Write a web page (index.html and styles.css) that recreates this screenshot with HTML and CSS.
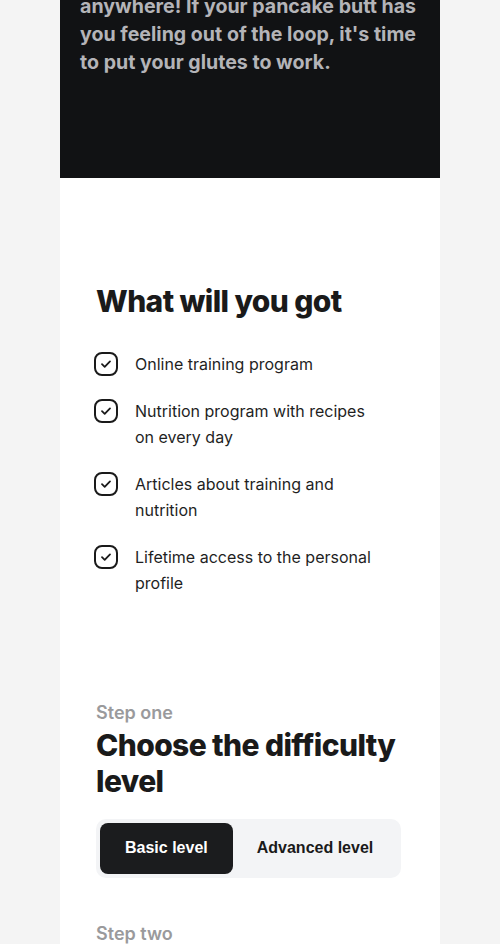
FILE: index.html
```html
<!DOCTYPE html>
<html lang="en">
<head>
<meta charset="utf-8">
<title>Glutes program</title>
<link rel="stylesheet" href="styles.css">
</head>
<body>
<main class="page">
  <section class="hero">
    <p class="hero-text">anywhere! If your pancake butt has you feeling out of the loop, it's time to put your glutes to work.</p>
  </section>
  <section class="content">
    <div class="benefits">
      <h2 class="title">What will you got</h2>
      <ul class="checklist">
        <li class="check-item">
          <svg class="check-icon" viewBox="0 0 24 24" width="24" height="24" aria-hidden="true"><rect x="1" y="1" width="22" height="22" rx="7" fill="none" stroke="#1a1a1a" stroke-width="2"/><path d="M8 12.2l2.7 2.6L16 9.4" fill="none" stroke="#1a1a1a" stroke-width="1.8" stroke-linecap="round" stroke-linejoin="round"/></svg>
          <span class="check-text">Online training program</span>
        </li>
        <li class="check-item">
          <svg class="check-icon" viewBox="0 0 24 24" width="24" height="24" aria-hidden="true"><rect x="1" y="1" width="22" height="22" rx="7" fill="none" stroke="#1a1a1a" stroke-width="2"/><path d="M8 12.2l2.7 2.6L16 9.4" fill="none" stroke="#1a1a1a" stroke-width="1.8" stroke-linecap="round" stroke-linejoin="round"/></svg>
          <span class="check-text">Nutrition program with recipes on every day</span>
        </li>
        <li class="check-item">
          <svg class="check-icon" viewBox="0 0 24 24" width="24" height="24" aria-hidden="true"><rect x="1" y="1" width="22" height="22" rx="7" fill="none" stroke="#1a1a1a" stroke-width="2"/><path d="M8 12.2l2.7 2.6L16 9.4" fill="none" stroke="#1a1a1a" stroke-width="1.8" stroke-linecap="round" stroke-linejoin="round"/></svg>
          <span class="check-text">Articles about training and nutrition</span>
        </li>
        <li class="check-item">
          <svg class="check-icon" viewBox="0 0 24 24" width="24" height="24" aria-hidden="true"><rect x="1" y="1" width="22" height="22" rx="7" fill="none" stroke="#1a1a1a" stroke-width="2"/><path d="M8 12.2l2.7 2.6L16 9.4" fill="none" stroke="#1a1a1a" stroke-width="1.8" stroke-linecap="round" stroke-linejoin="round"/></svg>
          <span class="check-text">Lifetime access to the personal profile</span>
        </li>
      </ul>
    </div>
    <div class="step">
      <p class="step-label">Step one</p>
      <h2 class="title">Choose the difficulty level</h2>
      <div class="segmented">
        <button class="seg-btn is-active" type="button">Basic level</button>
        <button class="seg-btn" type="button">Advanced level</button>
      </div>
    </div>
    <div class="step">
      <p class="step-label">Step two</p>
    </div>
  </section>
</main>
</body>
</html>
```

FILE: styles.css
```css
* { box-sizing: border-box; }

html, body {
  margin: 0;
  padding: 0;
}

body {
  background: #f4f4f4;
  font-family: Inter, "Noto Sans", sans-serif;
  color: #1a1a1a;
}

.page {
  width: 380px;
  margin: 0 auto;
  background: #ffffff;
  min-height: 944px;
}

.hero {
  background: #111214;
  height: 178px;
  padding: 0 18px 0 20px;
  overflow: hidden;
}

.hero-text {
  margin: -8px 0 0;
  font-size: 19.6px;
  line-height: 28px;
  font-weight: 700;
  color: #b4b4b8;
}

.content {
  padding: 105px 36px 0;
}

.title {
  margin: 0;
  font-size: 30px;
  line-height: 36px;
  font-weight: 800;
  letter-spacing: -0.6px;
  color: #1a1a1a;
}

.checklist {
  list-style: none;
  margin: 32px 0 0;
  padding: 0;
  display: flex;
  flex-direction: column;
  gap: 20px;
}

.check-item {
  display: flex;
  align-items: flex-start;
  gap: 17px;
  font-size: 16px;
  line-height: 26.5px;
  color: #1f1f1f;
}

.check-text {
  max-width: 242px;
}

.check-icon {
  flex: 0 0 auto;
  margin-left: -2px;
  margin-top: 1px;
}

.step {
  margin-top: 102px;
}

.step + .step {
  margin-top: 42px;
}

.step-label {
  margin: 0;
  font-size: 18px;
  line-height: 28px;
  font-weight: 600;
  color: #9a9a9c;
}

.segmented {
  display: inline-flex;
  margin-top: 20px;
  padding: 4px;
  background: #f3f4f6;
  border-radius: 10px;
}

.seg-btn {
  border: 0;
  background: transparent;
  height: 51px;
  padding: 0 24px;
  border-radius: 8px;
  font-family: "Liberation Sans", Arial, sans-serif;
  font-size: 16px;
  font-weight: 700;
  color: #1a1a1a;
  cursor: pointer;
}

.seg-btn.is-active {
  background: #1b1c1e;
  color: #ffffff;
  padding: 0 25px;
}
```
